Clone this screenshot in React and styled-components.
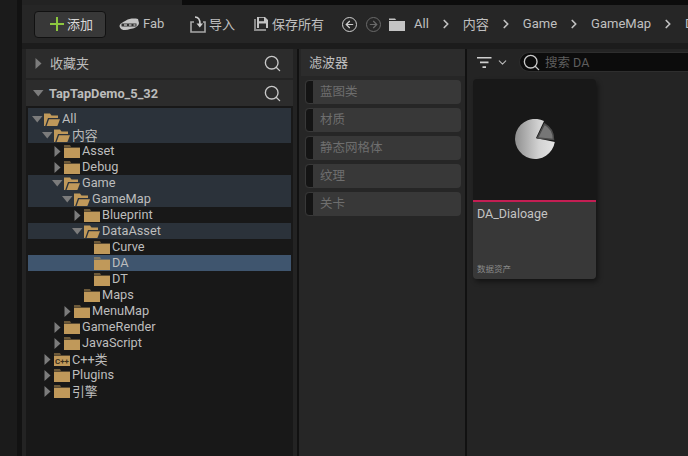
import styled, { createGlobalStyle } from "styled-components";
import { Search, ChevronRight, ChevronDown, ArrowLeft, ArrowRight } from "lucide-react";

const GlobalStyle = createGlobalStyle`
  html, body {
    margin: 0;
    padding: 0;
    background: #232323;
    overflow: hidden;
  }
  * { box-sizing: border-box; }
`;

const FONT = `"Roboto", "Noto Sans CJK SC", sans-serif`;

const treeData = [
  { label: "All", level: 0, open: true, band: true },
  { label: "内容", level: 1, open: true, band: true },
  { label: "Asset", level: 2, arrow: true },
  { label: "Debug", level: 2, arrow: true },
  { label: "Game", level: 2, open: true, band: true },
  { label: "GameMap", level: 3, open: true, band: true },
  { label: "Blueprint", level: 4, arrow: true },
  { label: "DataAsset", level: 4, open: true, band: true },
  { label: "Curve", level: 5 },
  { label: "DA", level: 5, selected: true },
  { label: "DT", level: 5 },
  { label: "Maps", level: 4 },
  { label: "MenuMap", level: 3, arrow: true },
  { label: "GameRender", level: 2, arrow: true },
  { label: "JavaScript", level: 2, arrow: true },
  { label: "C++类", level: 1, arrow: true, cpp: true },
  { label: "Plugins", level: 1, arrow: true },
  { label: "引擎", level: 1, arrow: true },
];

const filters = ["蓝图类", "材质", "静态网格体", "纹理", "关卡"];
const crumbs = ["All", "内容", "Game", "GameMap", "D"];

const ClosedFolder = ({ cpp }) => (
  <svg width="16" height="13" viewBox="0 0 16 13">
    <path d="M0 1.5 L0 0.5 L6 0.5 L7 1.5 Z" fill="#c0995a" />
    <rect x="0" y="2.6" width="16" height="10.4" fill="#c0995a" />
    {cpp && (
      <text x="1" y="11" fontSize="8" fontWeight="700" fontFamily="Roboto, sans-serif" fill="#3a2f1c">
        C++
      </text>
    )}
  </svg>
);

const OpenFolder = () => (
  <svg width="16" height="13" viewBox="0 0 16 13">
    <path d="M0 13 V0.5 H6 L7.5 2.5 H14 V5 H4 L1.2 13 Z" fill="#c0995a" />
    <path d="M2.6 13 L5 6.2 H16 L13.4 13 Z" fill="#c0995a" />
  </svg>
);

const Arrow = ({ open }) => (
  <ArrowBox>
    {open ? (
      <svg width="11" height="7" viewBox="0 0 11 7">
        <path d="M0 0 H10.5 L5.25 6.5 Z" fill="#7c7c7c" />
      </svg>
    ) : (
      <svg width="7" height="11" viewBox="0 0 7 11">
        <path d="M0.5 0 L6.5 5.5 L0.5 11 Z" fill="#7c7c7c" />
      </svg>
    )}
  </ArrowBox>
);

const App = () => {
  return (
    <Screen>
      <GlobalStyle />
      <SideStrip />
      <Main>
        <TopEdge>
          <TopEdgeLight />
        </TopEdge>
        <Toolbar>
          <AddButton>
            <svg width="14" height="14" viewBox="0 0 14 14">
              <path d="M6 0h2v6h6v2H8v6H6V8H0V6h6z" fill="#8cc63f" />
            </svg>
            <BarText>添加</BarText>
          </AddButton>
          <ToolItem $gap={4} $width={71}>
            <svg width="20" height="13" viewBox="0 0 20 13">
              <path d="M0.5 8 C1 5 5 4 7 2.5 C10 0.5 15 0 19 1 L20 5 C19.5 9 15 10.5 11 11 C7 13 1 12.5 0.5 8 Z" fill="#c4c4c4" />
              <path d="M2.5 5.5 H17.5 V8.5 H2.5 Z" fill="#303030" />
              <path d="M5 6.3 H8 V7.7 H5 Z M10 6.3 H12.5 V7.7 H10 Z M14.5 6.3 H16.5 V7.7 H14.5 Z" fill="#b0b0b0" />
            </svg>
            <BarText>Fab</BarText>
          </ToolItem>
          <ToolItem $gap={3} $width={64}>
            <svg width="16" height="17" viewBox="0 0 16 17">
              <path d="M4 6 H1 V16 H15 V6 H13" fill="none" stroke="#a8a8a8" strokeWidth="1.6" />
              <path d="M5 1 C9 1 10 4 10 8" fill="none" stroke="#d0d0d0" strokeWidth="1.6" />
              <path d="M6.5 7.5 H13 L9.8 11.5 Z" fill="#d0d0d0" />
            </svg>
            <BarText>导入</BarText>
          </ToolItem>
          <ToolItem $gap={4} $width={88}>
            <svg width="14" height="14" viewBox="0 0 14 14">
              <path d="M0 2 H2 V12 H12 V14 H0 Z" fill="#8a8a8a" />
              <path d="M3 0 H11 L14 3 V11 H3 Z" fill="#c4c4c4" />
              <rect x="5" y="0.8" width="5" height="3.4" fill="#2a2a2a" />
              <rect x="5" y="6.5" width="7" height="4.5" fill="#2a2a2a" />
            </svg>
            <BarText>保存所有</BarText>
          </ToolItem>
          <NavCircle $active>
            <ArrowLeft size={11} strokeWidth={2.6} />
          </NavCircle>
          <NavCircle>
            <ArrowRight size={11} strokeWidth={2.6} />
          </NavCircle>
          <CrumbFolder>
            <svg width="16" height="13" viewBox="0 0 16 13">
              <path d="M0 2 V0.5 H6 L7.2 2 Z" fill="#c4c4c4" />
              <rect y="3" width="16" height="10" fill="#c4c4c4" />
            </svg>
          </CrumbFolder>
          {crumbs.map((c, i) => (
            <Crumb key={c}>
              <BarText>{c}</BarText>
              {i < crumbs.length - 1 && <ChevronRight size={14} strokeWidth={3} color="#c0c0c0" />}
            </Crumb>
          ))}
        </Toolbar>
        <Body>
          <TreePanel>
            <PanelHeader $height={29} $mb={2}>
              <Arrow />
              <PanelTitle>收藏夹</PanelTitle>
              <SearchIcon size={19} strokeWidth={1.7} />
            </PanelHeader>
            <PanelHeader $height={26} $mb={0}>
              <Arrow open />
              <ProjectTitle>TapTapDemo_5_32</ProjectTitle>
              <SearchIcon size={19} strokeWidth={1.7} />
            </PanelHeader>
            <Tree>
              {treeData.map((row) => (
                <TreeRow key={row.label} $band={row.band} $selected={row.selected} $level={row.level}>
                  <ArrowSlot>{(row.arrow || row.open) && <Arrow open={row.open} />}</ArrowSlot>
                  {row.open ? <OpenFolder /> : <ClosedFolder cpp={row.cpp} />}
                  <RowLabel>{row.label}</RowLabel>
                </TreeRow>
              ))}
            </Tree>
          </TreePanel>
          <FilterPanel>
            <FilterHeader>
              <FilterTitle>滤波器</FilterTitle>
            </FilterHeader>
            <FilterList>
              {filters.map((f) => (
                <FilterChip key={f}>
                  <ChipMark />
                  <ChipLabel>{f}</ChipLabel>
                </FilterChip>
              ))}
            </FilterList>
          </FilterPanel>
          <AssetPanel>
            <AssetBar>
              <FilterLines>
                <svg width="15" height="11" viewBox="0 0 15 11">
                  <path d="M0 0h14.5v1.6H0zM3 4.6h8.5v1.6H3zM5.5 9.2h3.5V11H5.5z" fill="#d0d0d0" />
                </svg>
                <ChevronDown size={13} strokeWidth={2} color="#b8b8b8" />
              </FilterLines>
              <SearchBox>
                <Search size={19} strokeWidth={1.7} color="#c8c8c8" />
                <SearchText>搜索 DA</SearchText>
              </SearchBox>
            </AssetBar>
            <AssetCard>
              <Thumb>
                <svg width="40" height="40" viewBox="0 0 40 40">
                  <defs>
                    <linearGradient id="pie" x1="0" x2="1" y1="0" y2="0">
                      <stop offset="0" stopColor="#8f8f8f" />
                      <stop offset="0.6" stopColor="#d2d2d2" />
                      <stop offset="1" stopColor="#e4e4e4" />
                    </linearGradient>
                  </defs>
                  <path d="M21 19 L29 2 A20 20 0 1 0 39.8 23 Z" fill="url(#pie)" />
                  <path d="M22.5 19 L29.5 5 A17.5 17.5 0 0 1 38.5 20.5 Z" fill="#767676" stroke="#4c4c4c" strokeWidth="1.5" />
                </svg>
              </Thumb>
              <CardInfo>
                <AssetName>DA_Dialoage</AssetName>
                <AssetType>数据资产</AssetType>
              </CardInfo>
            </AssetCard>
          </AssetPanel>
        </Body>
      </Main>
    </Screen>
  );
};

const Screen = styled.div`
  width: 688px;
  height: 456px;
  display: flex;
  overflow: hidden;
  background: #232323;
  font-family: ${FONT};
`;

const SideStrip = styled.div`
  width: 22px;
  flex-shrink: 0;
  background: #121212;
  border-left: 17px solid #1b1b1b;
`;

const Main = styled.div`
  flex: 1;
  min-width: 0;
  display: flex;
  flex-direction: column;
`;

const TopEdge = styled.div`
  height: 5px;
  flex-shrink: 0;
  background: #0c0c0c;
`;

const TopEdgeLight = styled.div`
  width: 160px;
  height: 100%;
  background: #232323;
`;

const Toolbar = styled.div`
  height: 38px;
  flex-shrink: 0;
  display: flex;
  align-items: center;
  padding-left: 12px;
  background: #262626;
  color: #c0c0c0;
  font-size: 13px;
  white-space: nowrap;
  overflow: hidden;
`;

const BarText = styled.span`
  margin-top: -2px;
`;

const AddButton = styled.div`
  width: 72px;
  height: 27px;
  flex-shrink: 0;
  display: flex;
  align-items: center;
  gap: 3px;
  padding-left: 15px;
  margin-right: 13px;
  background: #383838;
  border: 1px solid #111111;
  border-radius: 4px;
  color: #d8d8d8;
`;

const ToolItem = styled.div`
  width: ${(p) => p.$width}px;
  flex-shrink: 0;
  display: flex;
  align-items: center;
  gap: ${(p) => p.$gap}px;
`;

const NavCircle = styled.div`
  width: 15px;
  height: 15px;
  margin-right: 9px;
  flex-shrink: 0;
  display: flex;
  align-items: center;
  justify-content: center;
  border-radius: 50%;
  border: 1.5px solid ${(p) => (p.$active ? "#d0d0d0" : "#6a6a6a")};
  color: ${(p) => (p.$active ? "#d0d0d0" : "#6a6a6a")};
`;

const CrumbFolder = styled.div`
  display: flex;
  flex-shrink: 0;
  margin: 0 9px 0 -1px;
`;

const Crumb = styled.div`
  display: flex;
  align-items: center;
  gap: 10px;
  margin-right: 10px;
  flex-shrink: 0;
`;

const Body = styled.div`
  flex: 1;
  min-height: 0;
  display: flex;
  background: #111111;
  border-top: 6px solid #1c1c1c;
`;

const TreePanel = styled.div`
  width: 275px;
  flex-shrink: 0;
  padding: 0 4px;
  margin-right: 2px;
  display: flex;
  flex-direction: column;
  background: #232323;
`;

const PanelHeader = styled.div`
  height: ${(p) => p.$height}px;
  margin-bottom: ${(p) => p.$mb}px;
  flex-shrink: 0;
  display: flex;
  align-items: center;
  padding: 0 11px 0 7px;
  background: #2c2c2c;
`;

const ArrowBox = styled.span`
  width: 11px;
  display: inline-flex;
  align-items: center;
  justify-content: center;
`;

const PanelTitle = styled.span`
  flex: 1;
  margin: -3px 0 0 6px;
  font-size: 13px;
  color: #bcbcbc;
`;

const ProjectTitle = styled(PanelTitle)`
  margin: 0 0 0 5px;
  font-weight: 700;
  font-size: 12.8px;
`;

const SearchIcon = styled(Search)`
  color: #c8c8c8;
`;

const Tree = styled.div`
  flex: 1;
  min-height: 0;
  padding: 2px 2px 0;
  background: #181818;
`;

const TreeRow = styled.div`
  height: 16px;
  display: flex;
  align-items: center;
  padding-left: ${(p) => 3 + p.$level * 10}px;
  background: ${(p) => (p.$selected ? "#3f556e" : p.$band ? "#2b323a" : "transparent")};
  &:first-child {
    height: 19px;
    padding-top: 3px;
  }
`;

const ArrowSlot = styled.span`
  width: 13px;
  flex-shrink: 0;
  display: flex;
  align-items: center;
  justify-content: center;
`;

const RowLabel = styled.span`
  margin: -2px 0 0 2px;
  font-size: 12.75px;
  color: #bdbdbd;
  white-space: nowrap;
`;

const FilterPanel = styled.div`
  width: 166px;
  flex-shrink: 0;
  margin-right: 2px;
  padding-left: 2px;
  background: #262626;
`;

const FilterHeader = styled.div`
  height: 27px;
  display: flex;
  align-items: center;
  padding-left: 8px;
  margin-bottom: 4px;
  background: #2c2c2c;
`;

const FilterTitle = styled.span`
  margin-top: -2px;
  font-size: 13px;
  color: #c0c0c0;
`;

const FilterList = styled.div`
  display: flex;
  flex-direction: column;
  gap: 4px;
  padding: 0 4px;
`;

const FilterChip = styled.div`
  height: 24px;
  display: flex;
  align-items: center;
  background: #383838;
  border-radius: 4px;
  overflow: hidden;
`;

const ChipMark = styled.span`
  width: 9px;
  height: 100%;
  background: #141414;
  border: 1px solid #383838;
  border-radius: 4px 0 0 4px;
`;

const ChipLabel = styled.span`
  margin: -3px 0 0 6px;
  font-size: 12.5px;
  color: #6e6e6e;
`;

const AssetPanel = styled.div`
  flex: 1;
  min-width: 0;
  background: #242424;
`;

const AssetBar = styled.div`
  height: 24px;
  margin-top: 1px;
  display: flex;
  align-items: center;
  padding-left: 10px;
  gap: 10px;
`;

const FilterLines = styled.div`
  display: flex;
  align-items: center;
  gap: 4px;
  flex-shrink: 0;
`;

const SearchBox = styled.div`
  flex: 1;
  height: 20px;
  display: flex;
  align-items: center;
  gap: 4px;
  padding-left: 2px;
  background: #0c0c0c;
  border-radius: 11px 0 0 11px;
  border: 1px solid #2e2e2e;
  border-right: 0;
`;

const SearchText = styled.span`
  margin-top: -1px;
  font-size: 12.5px;
  color: #5e5e5e;
`;

const AssetCard = styled.div`
  width: 123px;
  height: 200px;
  margin: 5px 0 0 6px;
  display: flex;
  flex-direction: column;
  border-radius: 4px;
  overflow: hidden;
  box-shadow: 2px 3px 5px rgba(0, 0, 0, 0.45);
`;

const Thumb = styled.div`
  height: 123px;
  flex-shrink: 0;
  display: flex;
  align-items: center;
  justify-content: center;
  padding-bottom: 2px;
  background: #181818;
  border-bottom: 2px solid #c41e53;
`;

const CardInfo = styled.div`
  flex: 1;
  display: flex;
  flex-direction: column;
  justify-content: space-between;
  padding: 4px 4px 5px;
  background: #383838;
`;

const AssetName = styled.span`
  font-size: 12.5px;
  color: #c4c4c4;
`;

const AssetType = styled.span`
  font-size: 8.5px;
  color: #8a8a8a;
`;

export default App;
